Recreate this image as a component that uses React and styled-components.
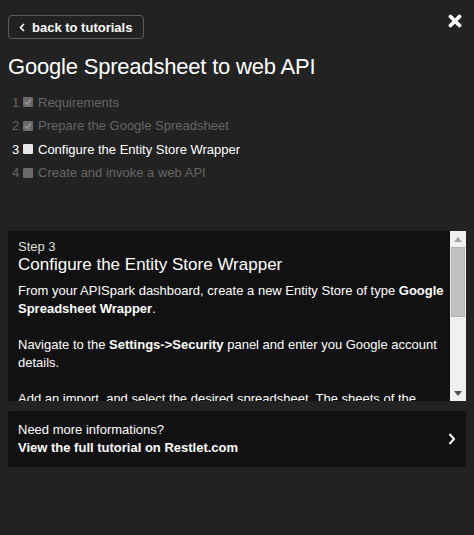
import React from "react";
import styled, { createGlobalStyle } from "styled-components";

const GlobalStyle = createGlobalStyle`
  html, body {
    margin: 0;
    background: #222;
    font-family: "Liberation Sans", Arial, sans-serif;
  }
`;

const Page = styled.div`
  width: 474px;
  min-height: 535px;
  box-sizing: border-box;
  padding: 15px 8px 0 8px;
  color: #fff;
`;

const Header = styled.div`
  display: flex;
  justify-content: space-between;
  align-items: flex-start;
`;

const BackButton = styled.button`
  display: flex;
  align-items: center;
  gap: 7px;
  height: 24px;
  box-sizing: border-box;
  padding: 0 11px 0 10px;
  background: transparent;
  border: 1px solid #5c5c5c;
  border-radius: 4px;
  color: #fff;
  font-family: inherit;
  font-weight: bold;
  font-size: 13px;
  cursor: pointer;
`;

const Close = styled.button`
  background: none;
  border: none;
  padding: 0;
  margin: -1px 4px 0 0;
  width: 14px;
  height: 14px;
  color: #fff;
  cursor: pointer;
`;

const Title = styled.h1`
  margin: 15px 0 10px 0;
  font-weight: normal;
  font-size: 22px;
  line-height: 26px;
  letter-spacing: -0.2px;
`;

const Steps = styled.ol`
  list-style: none;
  margin: 0;
  padding: 0 0 0 4px;
`;

const StepItem = styled.li`
  display: flex;
  align-items: center;
  box-sizing: border-box;
  height: 23.5px;
  padding-top: 1px;
  font-size: 13px;
  color: ${(p) => (p.$active ? "#fff" : "#666")};
`;

const Num = styled.span`
  width: 11px;
`;

const Box = styled.span`
  width: 10px;
  height: 10px;
  margin-right: 5px;
  border-radius: 1px;
  background: ${(p) => (p.$active ? "#e6e6e6" : "#6a6a6a")};
  display: flex;
  align-items: center;
  justify-content: center;
`;

const Panel = styled.div`
  display: flex;
  margin-top: 47px;
  height: 170px;
  background: #111;
`;

const PanelBody = styled.div`
  flex: 1;
  overflow: hidden;
  padding: 0 4px 0 10px;
`;

const ScrollTrack = styled.div`
  width: 16px;
  display: flex;
  flex-direction: column;
  background: #f0f0f0;
`;

const ScrollArrow = styled.div`
  height: 16px;
  display: flex;
  align-items: center;
  justify-content: center;
`;

const Thumb = styled.div`
  height: 70px;
  margin: 0 1px;
  background: #c1c1c1;
  border: 1px solid #b3b3b3;
  box-sizing: border-box;
`;

const TrackRest = styled.div`
  flex: 1;
`;

const StepLabel = styled.div`
  font-size: 13px;
  color: #ddd;
  margin-top: 8px;
  line-height: 15px;
`;

const StepTitle = styled.h2`
  margin: 0 0 6px 0;
  font-weight: normal;
  font-size: 17px;
  line-height: 22px;
`;

const Para = styled.p`
  margin: 0 0 18px 0;
  font-size: 13px;
  line-height: 18px;
  b {
    font-weight: bold;
  }
`;

const MoreCard = styled.a`
  display: flex;
  align-items: center;
  justify-content: space-between;
  margin-top: 10px;
  height: 56px;
  box-sizing: border-box;
  padding: 0 10px 0 10px;
  background: #111;
  border-radius: 3px;
  color: #fff;
  text-decoration: none;
  font-size: 13px;
  line-height: 18px;
`;

const Strong = styled.div`
  font-weight: bold;
`;

const steps = [
  { label: "Requirements", done: true },
  { label: "Prepare the Google Spreadsheet", done: true },
  { label: "Configure the Entity Store Wrapper", active: true },
  { label: "Create and invoke a web API" },
];

function Check() {
  return (
    <svg width="8" height="8" viewBox="0 0 8 8">
      <path d="M1 4.2 L3.2 6.2 L7 1.6" stroke="#9a9a9a" strokeWidth="1.6" fill="none" />
    </svg>
  );
}

export default function App() {
  return (
    <Page>
      <GlobalStyle />
      <Header>
        <BackButton>
          <svg width="6" height="9" viewBox="0 0 6 9">
            <path d="M5 1 L1.5 4.5 L5 8" stroke="#fff" strokeWidth="1.6" fill="none" />
          </svg>
          back to tutorials
        </BackButton>
        <Close aria-label="close">
          <svg width="14" height="14" viewBox="0 0 14 14">
            <path d="M2.5 2.5 L11.5 11.5 M11.5 2.5 L2.5 11.5" stroke="#fff" strokeWidth="3.8" strokeLinecap="round" />
          </svg>
        </Close>
      </Header>
      <Title>Google Spreadsheet to web API</Title>
      <Steps>
        {steps.map((s, i) => (
          <StepItem key={s.label} $active={s.active}>
            <Num>{i + 1}</Num>
            <Box $active={s.active}>{s.done && <Check />}</Box>
            {s.label}
          </StepItem>
        ))}
      </Steps>
      <Panel>
        <PanelBody>
          <StepLabel>Step 3</StepLabel>
          <StepTitle>Configure the Entity Store Wrapper</StepTitle>
          <Para>
            From your APISpark dashboard, create a new Entity Store of type <b>Google Spreadsheet Wrapper</b>.
          </Para>
          <Para>
            Navigate to the <b>Settings-&gt;Security</b> panel and enter you Google account details.
          </Para>
          <Para>
            Add an import, and select the desired spreadsheet. The sheets of the spreadsheet are listed as entities of
            the store.
          </Para>
          <Para>
            Deploy the Entity Store Wrapper, by clicking the <b>Deploy</b> button.
          </Para>
        </PanelBody>
        <ScrollTrack>
          <ScrollArrow>
            <svg width="8" height="5" viewBox="0 0 8 5">
              <polygon points="0,5 8,5 4,0" fill="#a3a3a3" />
            </svg>
          </ScrollArrow>
          <Thumb />
          <TrackRest />
          <ScrollArrow>
            <svg width="8" height="5" viewBox="0 0 8 5">
              <polygon points="0,0 8,0 4,5" fill="#505050" />
            </svg>
          </ScrollArrow>
        </ScrollTrack>
      </Panel>
      <MoreCard href="#">
        <div>
          <div>Need more informations?</div>
          <Strong>View the full tutorial on Restlet.com</Strong>
        </div>
        <svg width="8" height="12" viewBox="0 0 8 12">
          <path d="M1.5 1 L6 6 L1.5 11" stroke="#fff" strokeWidth="2" fill="none" />
        </svg>
      </MoreCard>
    </Page>
  );
}
